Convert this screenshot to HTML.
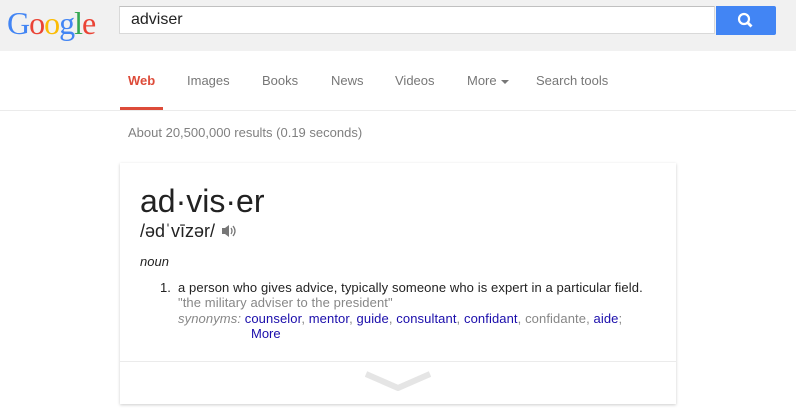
<!DOCTYPE html>
<html><head><style>
body{margin:0;width:796px;height:413px;background:#fff;font-family:"Liberation Sans",Arial,sans-serif;position:relative;overflow:hidden}
.hdr{position:absolute;left:0;top:0;width:796px;height:51px;background:#f1f1f1}
.logo{position:absolute;left:7px;top:5px;font-family:"Liberation Serif",serif;font-size:32px;letter-spacing:-1px}
.box{position:absolute;left:119px;top:6px;width:596px;height:28px;background:#fff;border:1px solid #d9d9d9;border-top-color:#c0c0c0;box-sizing:border-box}
.box span{position:absolute;left:11px;top:4px;font-size:16px;color:#222}
.btn{position:absolute;left:716px;top:6px;width:60px;height:29px;background:#4285f4;border-radius:0 2px 2px 0}
.nav{position:absolute;top:73px;font-size:13px;color:#777}
.ul{position:absolute;left:120px;top:107px;width:43px;height:3px;background:#dd4b39}
.line{position:absolute;left:0;top:110px;width:796px;height:1px;background:#ebebeb}
.res{position:absolute;left:128px;top:125px;font-size:13px;color:#808080}
.card{position:absolute;left:120px;top:163px;width:556px;height:241px;background:#fff;box-shadow:0 1px 3px rgba(0,0,0,.2)}
.card div{position:absolute;white-space:nowrap}
.t{letter-spacing:0.1px}
a{color:#1a0dab;text-decoration:none}
</style></head><body>
<div class="hdr"></div>
<div class="logo"><span style="color:#4285f4">G</span><span style="color:#ea4335">o</span><span style="color:#fbbc05">o</span><span style="color:#4285f4">g</span><span style="color:#34a853">l</span><span style="color:#ea4335">e</span></div>
<div class="box"><span>adviser</span></div>
<div class="btn"><svg width="60" height="29"><circle cx="28" cy="13" r="5" fill="none" stroke="#fff" stroke-width="2.2"/><line x1="31.5" y1="16.5" x2="35.5" y2="20.5" stroke="#fff" stroke-width="2.8"/></svg></div>
<div class="nav" style="left:128px;color:#dd4b39;font-weight:bold">Web</div>
<div class="nav" style="left:187px">Images</div>
<div class="nav" style="left:262px">Books</div>
<div class="nav" style="left:331px">News</div>
<div class="nav" style="left:395px">Videos</div>
<div class="nav" style="left:467px">More <span style="display:inline-block;width:0;height:0;border-left:4px solid transparent;border-right:4px solid transparent;border-top:4px solid #777;vertical-align:middle;margin-left:1px"></span></div>
<div class="nav" style="left:536px">Search tools</div>
<div class="ul"></div><div class="line"></div>
<div class="res">About 20,500,000 results (0.19 seconds)</div>
<div class="card">
<div style="left:20px;top:20px;font-size:32px;color:#222">ad·vis·er</div>
<div style="left:20px;top:58px;font-size:18px;color:#222">/ədˈvīzər/ <svg width="16" height="16" style="vertical-align:-2px"><path d="M2 5h3l4-3v12l-4-3H2z" fill="#777"/><path d="M11 5q2 3 0 6M13 3q4 5 0 10" stroke="#777" fill="none" stroke-width="1.3"/></svg></div>
<div style="left:20px;top:91px;font-size:13px;font-style:italic;color:#222">noun</div>
<div style="left:40px;top:117px;font-size:13px;color:#222">1.</div>
<div class="t" style="left:58px;top:117px;font-size:13px;color:#222">a person who gives advice, typically someone who is expert in a particular field.</div>
<div class="t" style="left:58px;top:132px;font-size:13px;color:#878787">"the military adviser to the president"</div>
<div class="t" style="left:58px;top:148px;font-size:13px;color:#878787"><i>synonyms:</i> <a>counselor</a>, <a>mentor</a>, <a>guide</a>, <a>consultant</a>, <a>confidant</a>, confidante, <a>aide</a>;</div>
<div style="left:131px;top:163px;font-size:13px"><a style="color:#1a0dab">More</a></div>
<div style="left:0;top:198px;width:556px;height:1px;background:#ebebeb"></div>
<div style="left:245px;top:208px"><svg width="66" height="20"><path d="M1 3L33 17L65 3" stroke="#e5e5e5" stroke-width="6" fill="none"/></svg></div>
</div>
</body></html>
